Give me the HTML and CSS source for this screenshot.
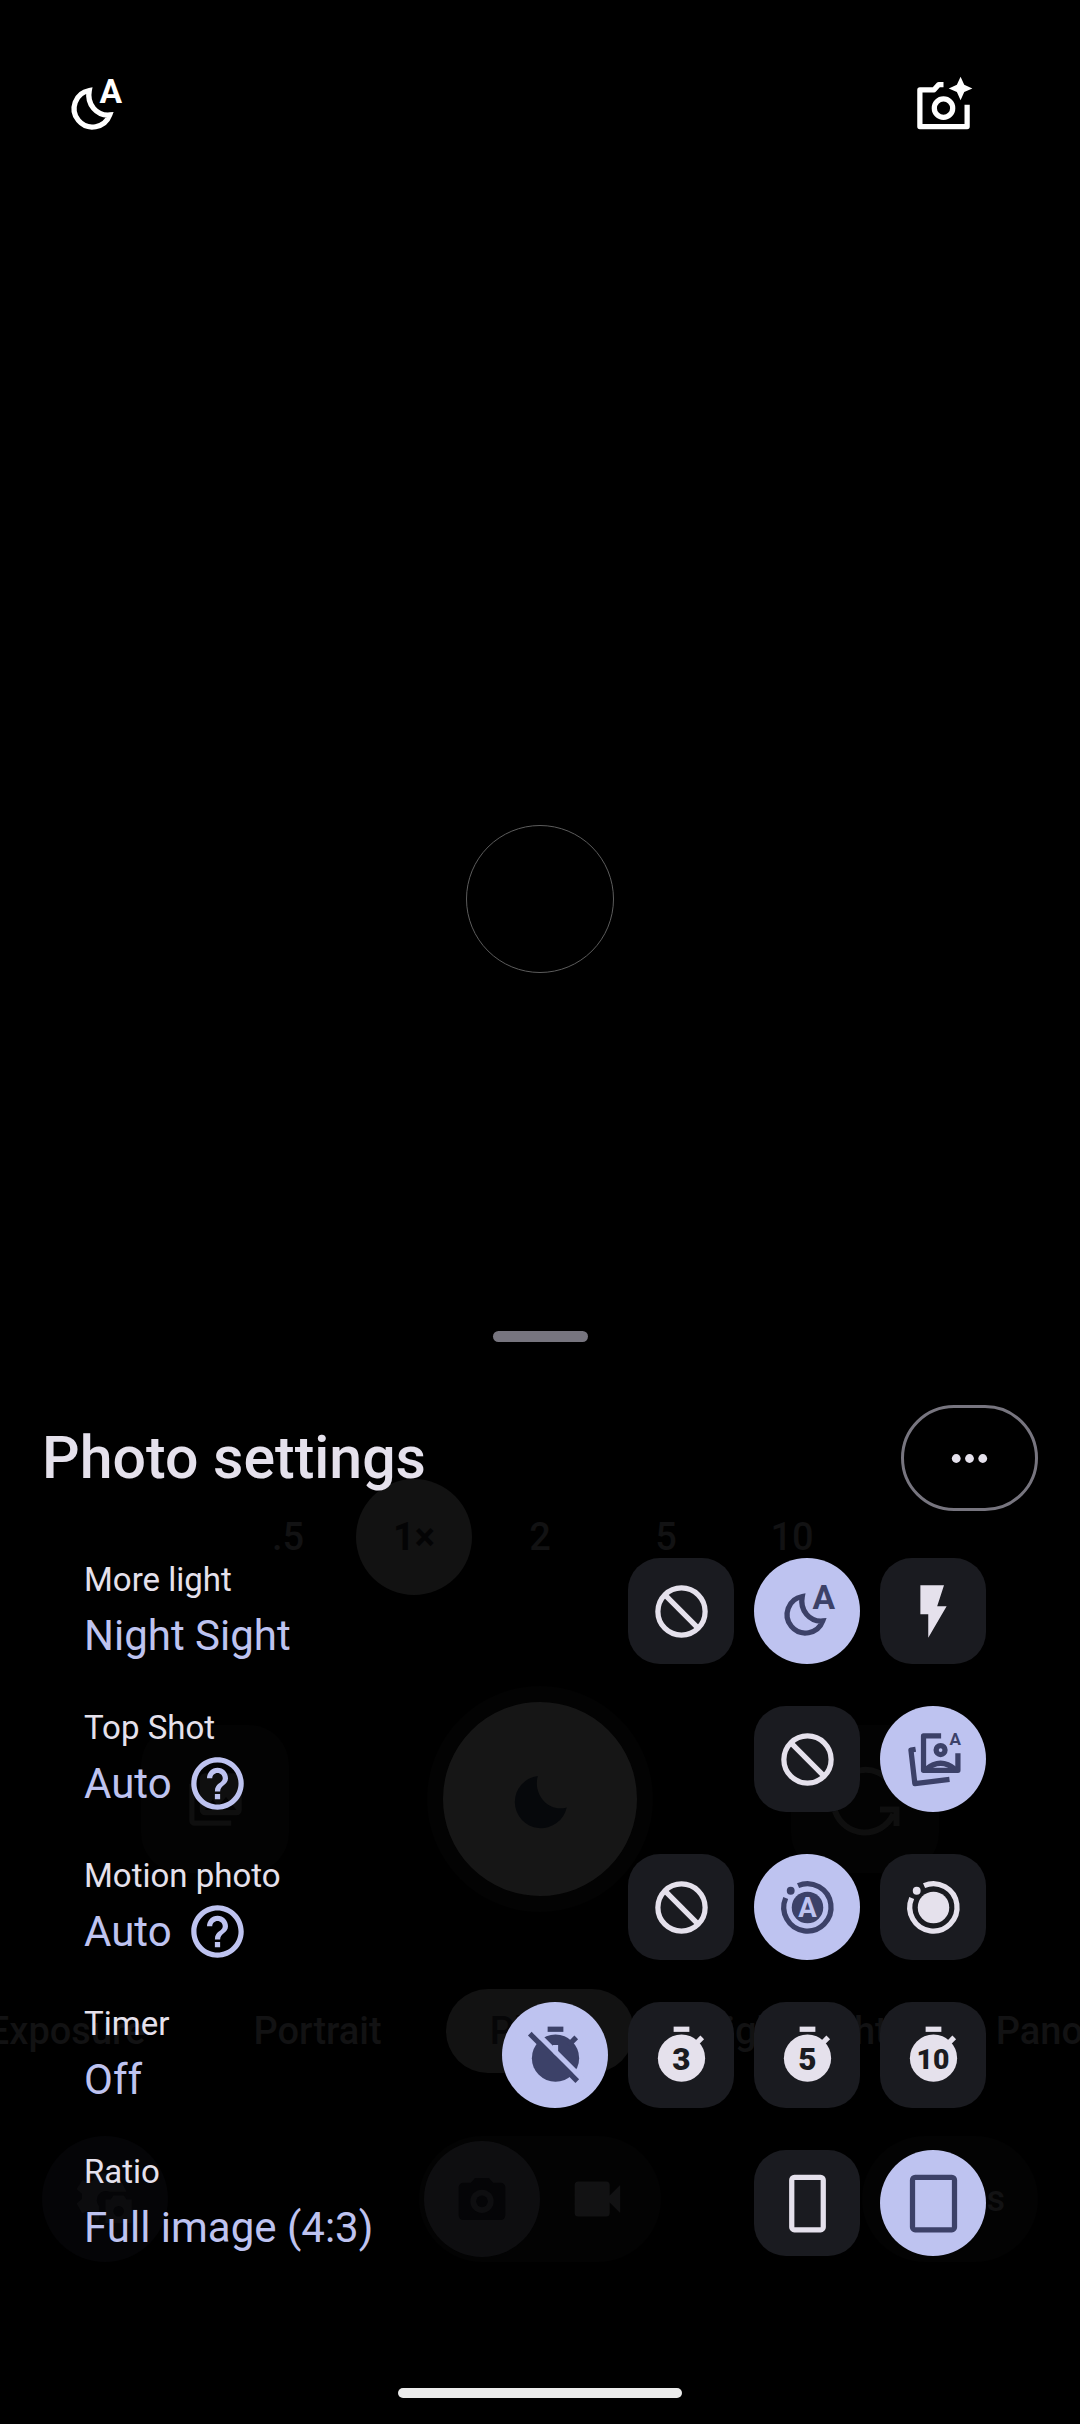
FILE: index.html
```html
<!DOCTYPE html>
<html lang="en">
<head>
  <meta charset="UTF-8">
  <meta name="viewport" content="width=device-width, initial-scale=1.0">
  <title>Photo settings</title>
  <link rel="stylesheet" href="styles.css">
</head>
<body>
  <!-- Shared icons -->
  <svg class="icon-defs" aria-hidden="true">
    <symbol id="icon-night" viewBox="0 0 24 24">
      <path d="M10 6.3A7 7 0 1 0 17.8 15.6C12.8 16 9 11.6 10 6.3Z" fill="none" stroke="currentColor" stroke-width="2" />
      <text x="18.2" y="11.2" class="icon-letter" font-size="12.8">A</text>
    </symbol>
    <symbol id="icon-none" viewBox="0 0 24 24">
      <g fill="none" stroke="currentColor" stroke-width="2">
        <circle cx="12" cy="12" r="9" />
        <path d="M5.6 5.6l12.8 12.8" />
      </g>
    </symbol>
    <symbol id="icon-help" viewBox="0 0 24 24">
      <path fill="currentColor" d="M11 18h2v-2h-2v2zm1-16C6.480 2 2 6.480 2 12s4.480 10 10 10 10-4.480 10-10S17.520 2 12 2zm0 18c-4.410 0-8-3.590-8-8s3.590-8 8-8 8 3.590 8 8-3.590 8-8 8zm0-14c-2.210 0-4 1.790-4 4h2c0-1.100.9-2 2-2s2 .9 2 2c0 2-3 1.750-3 5h2c0-2.250 3-2.500 3-5 0-2.210-1.790-4-4-4z" />
    </symbol>
    <symbol id="icon-stopwatch" viewBox="0 0 24 24">
      <path fill="currentColor" d="M9 1h6v2H9z" />
      <circle cx="12" cy="13" r="9" fill="currentColor" />
      <path d="M17 8l2.900-2.900" stroke="currentColor" stroke-width="2" />
    </symbol>
  </svg>

  <div class="screen">
    <!-- Camera behind the sheet -->
    <div class="camera">
      <div class="top-bar">
        <button class="top-button" aria-label="Night Sight auto"><svg class="icon"><use href="#icon-night" /></svg></button>
        <button class="top-button" aria-label="Camera suggestions">
          <svg class="icon" viewBox="0 0 24 24">
            <path d="M21 11.700V20H3V6h5.400l1.800-2H12" fill="none" stroke="currentColor" stroke-width="2" stroke-linejoin="round" />
            <circle cx="12" cy="13" r="3.500" fill="none" stroke="currentColor" stroke-width="2" />
            <path fill="currentColor" d="M18.500 1l1.400 3.100L23 5.500l-3.100 1.400L18.500 10l-1.400-3.100L14 5.500l3.100-1.400z" />
          </svg>
        </button>
      </div>

      <div class="viewfinder">
        <div class="focus-ring"></div>
        <div class="zoom-bar">
          <button class="zoom">.5</button>
          <button class="zoom zoom-active">1×</button>
          <button class="zoom">2</button>
          <button class="zoom">5</button>
          <button class="zoom">10</button>
        </div>
      </div>

      <div class="controls">
        <div class="shutter-row">
          <button class="side-button" aria-label="Gallery">
            <svg class="icon" viewBox="0 0 24 24"><path fill="currentColor" d="M22 16V4a2 2 0 0 0-2-2H8a2 2 0 0 0-2 2v12a2 2 0 0 0 2 2h12a2 2 0 0 0 2-2zm-11-4l2.030 2.710L16 11l4 5H8zM2 6v14a2 2 0 0 0 2 2h14v-2H4V6z" /></svg>
          </button>
          <button class="shutter" aria-label="Take photo">
            <svg class="icon" viewBox="0 0 24 24"><path fill="currentColor" d="M11 3A10 10 0 1 0 22 15C15 17 9 10 11 3Z" /></svg>
          </button>
          <button class="side-button" aria-label="Switch camera">
            <svg class="icon" viewBox="0 0 24 24">
              <path d="M2 10.500A10.500 10.500 0 0 1 21 7M2 16A10.500 10.500 0 0 0 21.500 17M2 3v6h6M22.500 21v-5.500H17" fill="none" stroke="currentColor" stroke-width="2" />
            </svg>
          </button>
        </div>

        <div class="modes">
          <div class="modes-side modes-left">
            <button class="mode">Long Exposure</button>
            <button class="mode">Portrait</button>
          </div>
          <button class="mode mode-active">Photo</button>
          <div class="modes-side">
            <button class="mode">Night Sight</button>
            <button class="mode">Panorama</button>
          </div>
        </div>

        <div class="bottom-row">
          <button class="round-button" aria-label="Settings">
            <svg class="icon" viewBox="0 0 24 24">
              <path fill="currentColor" d="M8 2h5l.5 2.500 1.800 1 2.500-.9L20 9h-6.500a3.500 3.500 0 0 0-4 5.500V20H8l-.5-2.600-2-1.100-2.400.9L1 13.500l2-1.700v-2L1 8l2.200-3.400 2.300.9 2-1z" />
              <path fill="currentColor" d="M12 12h2l1-1.500h4L20 12h2v9H12z" />
              <circle cx="17" cy="16.500" r="2" fill="#050507" />
            </svg>
          </button>
          <div class="switcher">
            <button class="switch switch-active" aria-label="Photo">
              <svg class="icon" viewBox="0 0 24 24">
                <path fill="currentColor" fill-rule="evenodd" d="M9 3L7.200 5H4a2 2 0 0 0-2 2v12a2 2 0 0 0 2 2h16a2 2 0 0 0 2-2V7a2 2 0 0 0-2-2h-3.200L15 3zm3 5a5 5 0 1 1 0 10 5 5 0 0 1 0-10z" />
                <circle cx="12" cy="13" r="2.500" fill="currentColor" />
              </svg>
            </button>
            <button class="switch" aria-label="Video">
              <svg class="icon" viewBox="0 0 24 24"><path fill="currentColor" d="M17 10.500V6a1.500 1.500 0 0 0-1.500-1.500h-12A1.500 1.500 0 0 0 2 6v12a1.500 1.500 0 0 0 1.500 1.500h12A1.500 1.500 0 0 0 17 18v-4.500l4.500 4.500V6z" /></svg>
            </button>
          </div>
          <button class="round-button modes-button">Modes</button>
        </div>
      </div>
    </div>

    <!-- Settings sheet -->
    <section class="sheet" aria-labelledby="sheet-title">
      <div class="handle"></div>
      <header class="sheet-header">
        <h1 class="sheet-title" id="sheet-title">Photo settings</h1>
        <button class="more-button" aria-label="More settings">
          <svg class="more-icon" viewBox="0 0 24 24" fill="currentColor"><circle cx="6" cy="12" r="2" /><circle cx="12" cy="12" r="2" /><circle cx="18" cy="12" r="2" /></svg>
        </button>
      </header>

      <div class="settings">
        <div class="setting">
          <div class="setting-text">
            <div class="setting-label">More light</div>
            <div class="setting-value">Night Sight</div>
          </div>
          <div class="options" role="group" aria-label="More light">
            <button class="option" aria-label="None"><svg class="icon"><use href="#icon-none" /></svg></button>
            <button class="option option-active" aria-label="Night Sight" aria-pressed="true"><svg class="icon"><use href="#icon-night" /></svg></button>
            <button class="option" aria-label="Flash"><svg class="icon" viewBox="0 0 24 24"><path fill="currentColor" d="M7 2h9l-2.600 8H17l-7 12v-9H7z" /></svg></button>
          </div>
        </div>

        <div class="setting">
          <div class="setting-text">
            <div class="setting-label">Top Shot</div>
            <div class="setting-value">Auto <button class="help" aria-label="About Top Shot"><svg class="icon"><use href="#icon-help" /></svg></button></div>
          </div>
          <div class="options" role="group" aria-label="Top Shot">
            <button class="option" aria-label="Off"><svg class="icon"><use href="#icon-none" /></svg></button>
            <button class="option option-active" aria-label="Auto" aria-pressed="true">
              <svg class="icon" viewBox="0 0 24 24">
                <g fill="none" stroke="currentColor" stroke-width="2" stroke-linejoin="round">
                  <path d="M14.900 3H8.200v13.100h13.100V9.600" />
                  <path d="M9 15.800q5.700-4.800 11.400 0" />
                  <circle cx="14.700" cy="8.400" r="1.700" />
                  <path d="M5.200 8.100l-1.800.3L4.900 21.200l13.200-1.600" />
                </g>
                <text x="20.300" y="6.500" class="icon-letter" font-size="6.500">A</text>
              </svg>
            </button>
          </div>
        </div>

        <div class="setting">
          <div class="setting-text">
            <div class="setting-label">Motion photo</div>
            <div class="setting-value">Auto <button class="help" aria-label="About Motion photo"><svg class="icon"><use href="#icon-help" /></svg></button></div>
          </div>
          <div class="options" role="group" aria-label="Motion photo">
            <button class="option" aria-label="Off"><svg class="icon"><use href="#icon-none" /></svg></button>
            <button class="option option-active" aria-label="Auto" aria-pressed="true">
              <svg class="icon" viewBox="0 0 24 24">
                <path d="M8.400 3.700A9 9 0 1 1 3.700 8.400" fill="none" stroke="currentColor" stroke-width="2" />
                <circle cx="5.600" cy="5.600" r="1.500" fill="currentColor" />
                <circle cx="12" cy="12" r="6" fill="currentColor" />
                <text x="12" y="15.700" class="icon-letter cut-light" font-size="10.500">A</text>
              </svg>
            </button>
            <button class="option" aria-label="On">
              <svg class="icon" viewBox="0 0 24 24">
                <path d="M8.400 3.700A9 9 0 1 1 3.700 8.400" fill="none" stroke="currentColor" stroke-width="2" />
                <circle cx="5.600" cy="5.600" r="1.500" fill="currentColor" />
                <circle cx="12" cy="12" r="6" fill="currentColor" />
              </svg>
            </button>
          </div>
        </div>

        <div class="setting">
          <div class="setting-text">
            <div class="setting-label">Timer</div>
            <div class="setting-value">Off</div>
          </div>
          <div class="options" role="group" aria-label="Timer">
            <button class="option option-active" aria-label="Off" aria-pressed="true">
              <svg class="icon" viewBox="0 0 24 24">
                <use href="#icon-stopwatch" />
                <path class="cut-light" d="M11 8h2v4h-2z" />
                <path class="slash-gap" d="M3 1.700L22 20.700" />
                <path d="M2.200 3.700L20.300 21.800" stroke="currentColor" stroke-width="2" />
              </svg>
            </button>
            <button class="option" aria-label="3 seconds">
              <svg class="icon" viewBox="0 0 24 24"><use href="#icon-stopwatch" /><text x="12" y="17.400" class="icon-letter icon-digit" font-size="12">3</text></svg>
            </button>
            <button class="option" aria-label="5 seconds">
              <svg class="icon" viewBox="0 0 24 24"><use href="#icon-stopwatch" /><text x="12" y="17.400" class="icon-letter icon-digit" font-size="12">5</text></svg>
            </button>
            <button class="option" aria-label="10 seconds">
              <svg class="icon" viewBox="0 0 24 24"><use href="#icon-stopwatch" /><text x="11.800" y="17" class="icon-letter icon-digit" font-size="10.800">10</text></svg>
            </button>
          </div>
        </div>

        <div class="setting">
          <div class="setting-text">
            <div class="setting-label">Ratio</div>
            <div class="setting-value">Full image (4:3)</div>
          </div>
          <div class="options" role="group" aria-label="Ratio">
            <button class="option" aria-label="Wide crop (16:9)">
              <svg class="icon" viewBox="0 0 24 24"><rect x="6" y="2" width="12" height="20" rx="1" fill="none" stroke="currentColor" stroke-width="2" /></svg>
            </button>
            <button class="option option-active" aria-label="Full image (4:3)" aria-pressed="true">
              <svg class="icon" viewBox="0 0 24 24"><rect x="4" y="2" width="16" height="20" rx="1" fill="none" stroke="currentColor" stroke-width="2" /></svg>
            </button>
          </div>
        </div>
      </div>

      <div class="home-bar"></div>
    </section>
  </div>
</body>
</html>
```

FILE: styles.css
```css
/* General Reset */
* {
  box-sizing: border-box;
}

body, h1 {
  margin: 0;
  padding: 0;
}

body {
  font-family: 'Roboto', sans-serif;
  background-color: #000;
  color: #e5e1ec;
}

button {
  display: flex;
  justify-content: center;
  align-items: center;
  flex-shrink: 0;
  margin: 0;
  padding: 0;
  border: none;
  background: none;
  color: inherit;
  font: inherit;
  cursor: pointer;
}

/* Icons */
.icon-defs {
  display: none;
}

.icon {
  display: block;
  width: 63px;
  height: 63px;
  overflow: visible;
}

.icon-letter {
  fill: currentColor;
  font-family: 'Roboto', sans-serif;
  font-weight: 700;
  text-anchor: middle;
}

.icon-digit {
  fill: #1a1b20;
  font-weight: 900;
}

.cut-light {
  fill: #bec3f0;
}

.slash-gap {
  stroke: #bec3f0;
  stroke-width: 2;
}

/* Camera and sheet share one cell, the sheet on top */
.screen {
  display: grid;
  grid-template-columns: minmax(0, 1fr);
  min-height: 100vh;
  overflow: hidden;
}

.camera,
.sheet {
  grid-area: 1 / 1;
}

.camera {
  display: flex;
  flex-direction: column;
  color: #121213;
  font-size: 38px;
  font-weight: 500;
}

.top-bar {
  display: flex;
  justify-content: space-between;
  padding: 74px 105px 41px 63px;
  color: #fff;
}

/* Viewfinder */
.viewfinder {
  display: grid;
  flex: 1;
  justify-items: center;
}

.focus-ring {
  grid-area: 1 / 1;
  align-self: center;
  width: 148px;
  height: 148px;
  border: 1px solid #5c5c5c;
  border-radius: 50%;
}

.zoom-bar {
  grid-area: 1 / 1;
  align-self: end;
  display: flex;
  gap: 10px;
  padding-bottom: 25px;
}

.zoom {
  width: 116px;
  height: 116px;
  border-radius: 50%;
}

.zoom-active {
  background-color: #121212;
  color: #040405;
  font-weight: 700;
}

/* Shutter, modes and bottom row */
.controls {
  display: flex;
  flex-direction: column;
  padding: 66px 0 162px;
}

.shutter-row {
  display: flex;
  justify-content: space-between;
  align-items: center;
  padding: 0 141px;
  color: #0f0f0f;
}

.side-button {
  width: 148px;
  height: 148px;
  border-radius: 40px;
  background-color: #030303;
}

.side-button:last-child .icon {
  width: 72px;
  height: 72px;
}

.shutter {
  width: 226px;
  height: 226px;
  border: 16px solid #030303;
  border-radius: 50%;
  background-color: #161616;
  color: #06080b;
}

.modes {
  display: grid;
  grid-template-columns: minmax(0, 1fr) auto minmax(0, 1fr);
  gap: 20px;
  margin-top: 77px;
}

.modes-side {
  display: flex;
  gap: 20px;
}

.modes-left {
  justify-content: flex-end;
}

.mode {
  height: 84px;
  padding: 0 44px;
  border-radius: 42px;
  white-space: nowrap;
}

.mode-active {
  background-color: #121212;
  color: #060607;
}

.bottom-row {
  display: grid;
  grid-template-columns: 1fr auto 1fr;
  margin-top: 63px;
  padding: 0 42px;
}

.round-button {
  width: 126px;
  height: 126px;
  border-radius: 63px;
  background-color: #050507;
  color: #0c0c0e;
}

.modes-button {
  justify-self: end;
  width: 176px;
  background-color: #030303;
  color: #121213;
  font-size: 36px;
}

.switcher {
  display: flex;
  align-items: center;
  padding: 0 5px;
  border-radius: 63px;
  background-color: #030303;
}

.switch {
  width: 116px;
  height: 116px;
  border-radius: 50%;
}

.switch .icon {
  width: 56px;
  height: 56px;
}

.switch-active {
  background-color: #0e0e10;
  color: #050507;
}

/* Settings sheet */
.sheet {
  display: flex;
  flex-direction: column;
  align-self: end;
  position: relative;
  padding: 0 42px 26px;
}

.handle {
  align-self: center;
  width: 95px;
  height: 11px;
  border-radius: 6px;
  background-color: #77757f;
}

.sheet-header {
  display: flex;
  justify-content: space-between;
  align-items: center;
  margin-top: 63px;
}

.sheet-title {
  font-size: 59px;
  line-height: 72px;
  font-weight: 500;
}

.more-button {
  width: 137px;
  height: 106px;
  border: 3px solid #77757f;
  border-radius: 53px;
}

.more-icon {
  width: 53px;
  height: 53px;
}

.settings {
  display: flex;
  flex-direction: column;
  gap: 42px;
  padding: 47px 52px 0 42px;
}

.setting {
  display: flex;
  justify-content: space-between;
  height: 106px;
}

.setting-label {
  font-size: 33px;
  line-height: 44px;
}

.setting-value {
  display: flex;
  align-items: center;
  gap: 14px;
  height: 67px;
  color: #bec3f0;
  font-size: 42px;
}

.options {
  display: flex;
  gap: 20px;
}

.option {
  width: 106px;
  height: 106px;
  border-radius: 32px;
  background-color: #1a1b20;
}

.option-active {
  border-radius: 50%;
  background-color: #bec3f0;
  color: #3c4168;
}

.home-bar {
  align-self: center;
  width: 284px;
  height: 10px;
  margin-top: 132px;
  border-radius: 5px;
  background-color: #ebebeb;
}
```
